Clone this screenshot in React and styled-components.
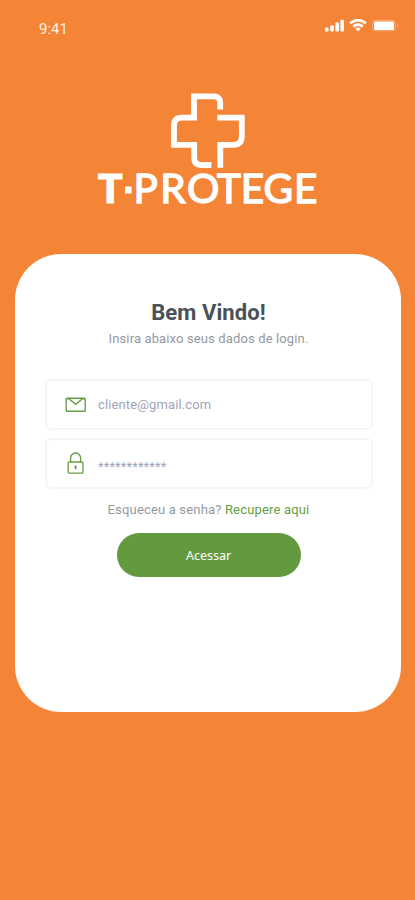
import React from "react";
import styled, { createGlobalStyle } from "styled-components";

const GlobalStyle = createGlobalStyle`
  * {
    box-sizing: border-box;
  }
  body {
    margin: 0;
    background: #f58536;
    font-family: Roboto, "Liberation Sans", sans-serif;
  }
`;

function StatusIcons() {
  return (
    <svg width="76" height="14" viewBox="0 0 76 14" fill="#fff">
      <rect x="1" y="8.5" width="3.6" height="4" rx="1" />
      <rect x="6.2" y="6.2" width="3.6" height="6.3" rx="1" />
      <rect x="11.4" y="3.5" width="3.6" height="9" rx="1" />
      <rect x="16.4" y="0.7" width="3.6" height="11.8" rx="1" />
      <g fill="none" stroke="#fff" strokeWidth="2.6">
        <path d="M26.1 4.3Q34 -2.2 41.9 4.3" />
        <path d="M29.2 7.5Q34 3.6 38.8 7.5" />
      </g>
      <path d="M31.3 9.6Q34 7.6 36.7 9.6L34 12.5Z" />
      <rect x="48.4" y="1.4" width="23" height="10.4" rx="3" fill="none" stroke="#fff" strokeOpacity="0.3" />
      <rect x="50" y="2.4" width="20" height="8.6" rx="1.6" />
      <path d="M73 4.8v3.8q1.6-.6 1.6-1.9T73 4.8Z" opacity="0.4" />
    </svg>
  );
}

function Logo() {
  return (
    <svg width="230" height="126" viewBox="93 93 230 126">
      <g fill="none" stroke="#fff" strokeWidth="5.8">
        <path d="M220.2 109.5V103q0-6.6-6.6-6.6H194v21.2h-12.2q-7.8 0-7.8 7.8v19.4h20.2v12.6q0 7.6 7.6 7.6h9.6" />
        <path d="M217.3 117.6h24.5v19q0 8.2-8.2 8.2h-13.3v23" />
      </g>
      <g fill="#fff" stroke="#fff" fontFamily="Lato, sans-serif" fontSize="40.5">
        <text x="98" y="203" fontWeight="900" strokeWidth="1.2">T</text>
        <rect x="125" y="186.5" width="6.6" height="7" stroke="none" />
        <text x="133.6 160.2 187 217 240.8 263.6 294.1" y="203" fontWeight="400" strokeWidth="1.4">PROTEGE</text>
      </g>
    </svg>
  );
}

function MailIcon() {
  return (
    <svg width="22" height="16" viewBox="0 0 22 16" fill="none" stroke="#659d45" strokeWidth="1.4">
      <rect x="1.2" y="1.2" width="19" height="13" rx="0.8" />
      <path d="M1.8 1.8h2l6.9 5.6 6.9-5.6h2" />
    </svg>
  );
}

function LockIcon() {
  return (
    <svg width="18" height="24" viewBox="0 0 18 24" fill="none" stroke="#659d45" strokeWidth="1.3">
      <rect x="1.2" y="10" width="14.8" height="11.2" rx="1.2" />
      <path d="M3.6 10V6a5 5 0 0 1 10 0V10" />
      <circle cx="8.6" cy="14.8" r="1.2" fill="#659d45" stroke="none" />
      <path d="M8.6 15v2.5" />
    </svg>
  );
}

export default function App() {
  return (
    <>
      <GlobalStyle />
      <Screen>
        <StatusBar>
          <Time>9:41</Time>
          <StatusIcons />
        </StatusBar>
        <Brand>
          <Logo />
        </Brand>
        <Card>
          <Title>Bem Vindo!</Title>
          <Subtitle>Insira abaixo seus dados de login.</Subtitle>
          <Fields>
            <Field>
              <IconSlot>
                <MailIcon />
              </IconSlot>
              <Value>cliente@gmail.com</Value>
            </Field>
            <Field>
              <IconSlot>
                <LockIcon />
              </IconSlot>
              <Value $masked>************</Value>
            </Field>
          </Fields>
          <Forgot>
            Esqueceu a senha? <a>Recupere aqui</a>
          </Forgot>
          <Button>Acessar</Button>
        </Card>
      </Screen>
    </>
  );
}

const Screen = styled.div`
  width: 415px;
  height: 900px;
  overflow: hidden;
  background: #f58536;
`;

const StatusBar = styled.div`
  display: flex;
  justify-content: space-between;
  height: 93px;
  padding: 19px 15px 0 39px;
`;

const Time = styled.span`
  margin-top: 1px;
  font-size: 15px;
  line-height: 18px;
  color: #ffeee2;
`;

const Brand = styled.div`
  display: flex;
  height: 161px;
  padding-left: 93px;
`;

const Card = styled.main`
  display: flex;
  flex-direction: column;
  align-items: center;
  width: 386.5px;
  height: 458px;
  margin-left: 14.5px;
  padding: 44px 28.5px 0 30px;
  border-radius: 46px;
  background: #fff;
`;

const Title = styled.h1`
  margin: 0;
  font-size: 22px;
  font-weight: 700;
  line-height: 29px;
  letter-spacing: 0.1px;
  color: #4b5158;
`;

const Subtitle = styled.p`
  margin: 2px 0 0;
  font-size: 13px;
  line-height: 20px;
  letter-spacing: 0.13px;
  white-space: nowrap;
  color: #949aa3;
`;

const Fields = styled.div`
  display: flex;
  flex-direction: column;
  gap: 8px;
  width: 100%;
  margin-top: 30px;
`;

const Field = styled.div`
  display: flex;
  align-items: center;
  height: 51px;
  padding-left: 17.5px;
  border: 2px solid #f6f6f7;
  border-radius: 6px;
`;

const IconSlot = styled.span`
  display: flex;
  justify-content: center;
  width: 24px;
  margin-right: 10px;
`;

const Value = styled.span`
  padding-top: ${(props) => (props.$masked ? "7px" : "1px")};
  font-size: 13px;
  line-height: 18px;
  letter-spacing: ${(props) => (props.$masked ? "0.1px" : "0.13px")};
  color: #a0a5b8;
`;

const Forgot = styled.p`
  margin: 11px 0 0;
  font-size: 13px;
  line-height: 20px;
  letter-spacing: 0.17px;
  white-space: nowrap;
  color: #949aa3;

  a {
    color: #659d45;
  }
`;

const Button = styled.button`
  width: 184px;
  height: 44px;
  margin-top: 13px;
  padding: 0;
  border: 0;
  border-radius: 22px;
  background: #649a3f;
  font-family: "Noto Sans", sans-serif;
  font-size: 12.5px;
  color: #fff;
`;
